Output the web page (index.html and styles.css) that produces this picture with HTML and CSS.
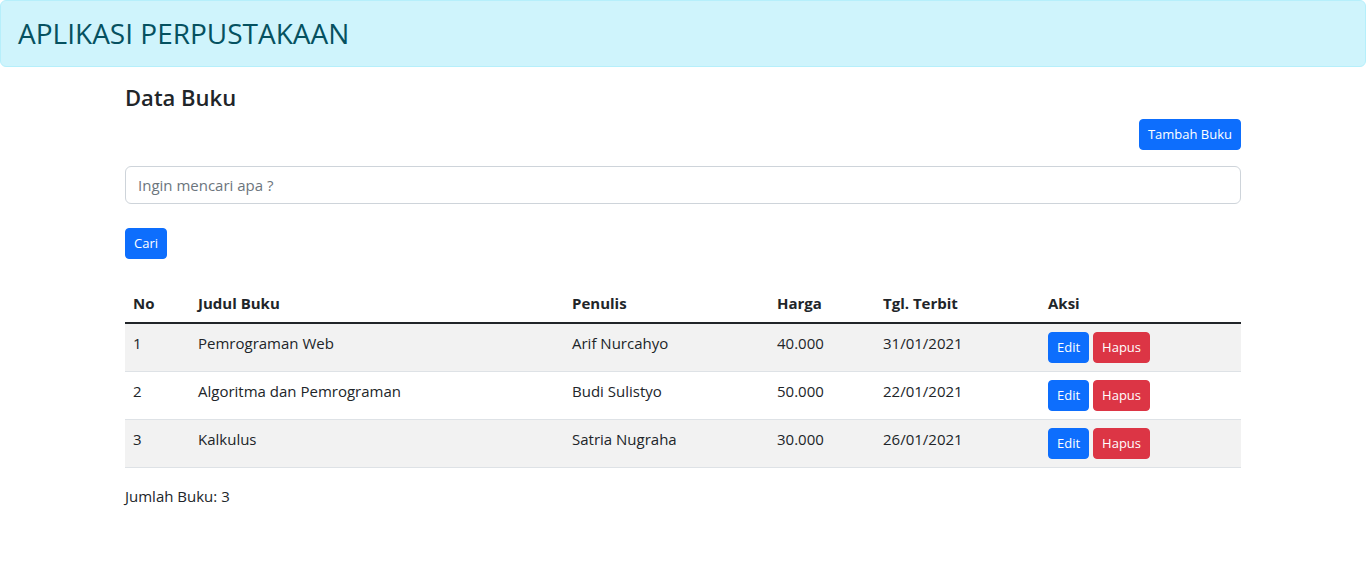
FILE: index.html
```html
<!DOCTYPE html>
<html lang="id">
<head>
<meta charset="utf-8">
<title>Aplikasi Perpustakaan</title>
<link rel="stylesheet" href="styles.css">
</head>
<body>
<div class="alert">
  <h3 class="alert-title">APLIKASI PERPUSTAKAAN</h3>
</div>
<div class="container">
  <h4 class="page-title">Data Buku</h4>
  <div class="actions">
    <button class="btn btn-primary">Tambah Buku</button>
  </div>
  <form class="search">
    <input class="form-control" type="text" placeholder="Ingin mencari apa ?">
    <div class="search-btn"><button class="btn btn-primary" type="button">Cari</button></div>
  </form>
  <table class="table">
    <colgroup>
      <col class="c-no"><col class="c-judul"><col class="c-penulis"><col class="c-harga"><col class="c-tgl"><col class="c-aksi">
    </colgroup>
    <thead>
      <tr><th>No</th><th>Judul Buku</th><th>Penulis</th><th>Harga</th><th>Tgl. Terbit</th><th>Aksi</th></tr>
    </thead>
    <tbody>
      <tr class="odd"><td>1</td><td>Pemrograman Web</td><td>Arif Nurcahyo</td><td>40.000</td><td>31/01/2021</td><td><div class="btns"><button class="btn btn-primary">Edit</button><button class="btn btn-danger">Hapus</button></div></td></tr>
      <tr><td>2</td><td>Algoritma dan Pemrograman</td><td>Budi Sulistyo</td><td>50.000</td><td>22/01/2021</td><td><div class="btns"><button class="btn btn-primary">Edit</button><button class="btn btn-danger">Hapus</button></div></td></tr>
      <tr class="odd"><td>3</td><td>Kalkulus</td><td>Satria Nugraha</td><td>30.000</td><td>26/01/2021</td><td><div class="btns"><button class="btn btn-primary">Edit</button><button class="btn btn-danger">Hapus</button></div></td></tr>
    </tbody>
  </table>
  <p class="count">Jumlah Buku: 3</p>
</div>
</body>
</html>
```

FILE: styles.css
```css
* { box-sizing: border-box; }
html, body { margin: 0; padding: 0; }
body {
  font-family: "Open Sans", "Noto Sans", "Liberation Sans", sans-serif;
  font-size: 15px;
  line-height: 24px;
  color: #212529;
  background: #fff;
}
.alert {
  background: #cff4fc;
  border: 1px solid #b6effb;
  border-radius: 6px;
  padding: 15px 16px 16px 17px;
  height: 67px;
}
.alert-title {
  margin: 0;
  font-size: 28px;
  line-height: 34px;
  font-weight: 500;
  color: #055160;
}
.container {
  width: 1116px;
  margin: 0 auto;
  padding-top: 16px;
}
.page-title {
  margin: 0;
  font-size: 22px;
  line-height: 29px;
  font-weight: 600;
}
.actions {
  display: flex;
  justify-content: flex-end;
  margin-top: 7px;
}
.btn {
  font-family: inherit;
  font-size: 13px;
  line-height: 21px;
  padding: 4px 8px;
  border: 1px solid transparent;
  border-radius: 4px;
  color: #fff;
  cursor: pointer;
  height: 31px;
}
.btn-primary { background: #0d6efd; border-color: #0d6efd; }
.btn-danger { background: #dc3545; border-color: #dc3545; }
.search { margin: 16px 0 0; }
.form-control {
  display: block;
  width: 100%;
  height: 38px;
  padding: 6px 12px;
  font-family: inherit;
  font-size: 15px;
  line-height: 24px;
  color: #212529;
  border: 1px solid #ced4da;
  border-radius: 6px;
}
.form-control::placeholder { color: #6c757d; }
.search-btn { margin-top: 24px; display: flex; }
.table {
  width: 100%;
  border-collapse: collapse;
  margin-top: 25px;
  table-layout: fixed;
}
.c-no { width: 65px; }
.c-judul { width: 374px; }
.c-penulis { width: 205px; }
.c-harga { width: 106px; }
.c-tgl { width: 165px; }
.c-aksi { width: 201px; }
.table th, .table td {
  text-align: left;
  vertical-align: top;
  padding: 8px;
  border-bottom: 1px solid #dee2e6;
}
.table th {
  font-weight: 700;
  border-bottom: 0;
  padding: 7px 8px 7px;
}
.table thead tr { border-bottom: 2px solid #212529; }
.table td { height: 48px; padding-top: 7px; }
.table tr.odd td { background: #f2f2f2; }
.btns { display: flex; gap: 4px; padding-top: 1px; }
.count { margin: 16px 0 0; }
```
